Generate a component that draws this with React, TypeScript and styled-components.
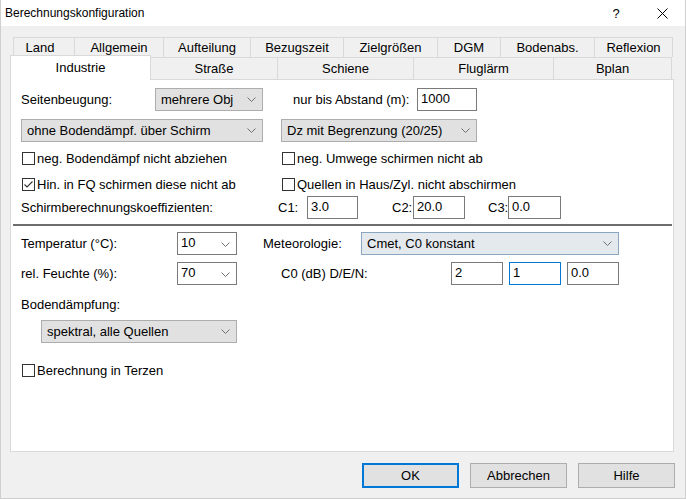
import React from 'react';
import styled, { createGlobalStyle, css } from 'styled-components';

const GlobalStyle = createGlobalStyle`
  html, body {
    margin: 0;
    padding: 0;
    background: #ffffff;
  }
  body {
    font-family: "Liberation Sans", Arial, sans-serif;
    font-size: 13px;
    color: #000;
  }
`;

const Window = styled.div`
  width: 686px;
  height: 499px;
  box-sizing: border-box;
  border: 1px solid #cfcfcf;
  border-top: none;
  background: #f0f0f0;
  display: flex;
  flex-direction: column;
`;

const TitleBar = styled.div`
  height: 26px;
  flex: none;
  background: #fff;
  display: flex;
  align-items: center;
  font-size: 12px;
  padding-left: 4px;
`;

const Title = styled.span`
  flex: 1;
`;

const CaptionButton = styled.div`
  width: 46px;
  height: 26px;
  display: flex;
  align-items: center;
  justify-content: center;
  font-size: 13px;
`;

const Body = styled.div`
  flex: 1;
  display: flex;
  flex-direction: column;
  padding: 11px 10px 0 9px;
`;

const TabRow = styled.div<{ $indent: number; $height: number }>`
  display: flex;
  margin-left: ${p => p.$indent}px;
  height: ${p => p.$height}px;
`;

const Tab = styled.div<{ $width: number; $selected?: boolean; $shift?: number }>`
  width: ${p => p.$width}px;
  box-sizing: border-box;
  display: flex;
  align-items: center;
  justify-content: center;
  border: 1px solid #d9d9d9;
  border-bottom: none;
  margin-left: -1px;
  padding-right: ${p => p.$shift ?? 0}px;
  background: #f0f0f0;
  &:first-child {
    margin-left: 0;
  }
  ${p => p.$selected && css`
    background: #fff;
    margin: -2px 0 -1px 0;
    position: relative;
    z-index: 1;
    align-items: flex-start;
    padding-top: 4px;
  `}
`;

const Panel = styled.div`
  width: 664px;
  height: 373px;
  box-sizing: border-box;
  border: 1px solid #d9d9d9;
  background: #fff;
  padding: 8px 0 0 10px;
  display: flex;
  flex-direction: column;
`;

const Row = styled.div<{ $top?: number; $height?: number }>`
  display: flex;
  align-items: center;
  margin-top: ${p => p.$top ?? 0}px;
  height: ${p => p.$height ?? 23}px;
`;

const Label = styled.span<{ $width?: number; $gap?: number }>`
  flex: none;
  width: ${p => (p.$width ? `${p.$width}px` : 'auto')};
  margin-left: ${p => p.$gap ?? 0}px;
  white-space: nowrap;
`;

const TextField = styled.div<{ $width: number; $gap?: number; $focused?: boolean }>`
  flex: none;
  width: ${p => p.$width}px;
  height: 23px;
  box-sizing: border-box;
  margin-left: ${p => p.$gap ?? 0}px;
  border: 1px solid ${p => (p.$focused ? '#0078d7' : '#7a7a7a')};
  background: #fff;
  padding: 2px 0 0 3px;
  line-height: 16px;
`;

type ComboKind = 'grey' | 'white' | 'hover';

const comboColors: Record<ComboKind, { bg: string; border: string }> = {
  grey: { bg: '#e1e1e1', border: '#adadad' },
  white: { bg: '#ffffff', border: '#7a7a7a' },
  hover: { bg: '#e4e9ee', border: '#8aa6c1' },
};

const ComboBox = styled.div<{ $width: number; $gap?: number; $kind: ComboKind; $height?: number }>`
  flex: none;
  width: ${p => p.$width}px;
  height: ${p => p.$height ?? 23}px;
  box-sizing: border-box;
  margin-left: ${p => p.$gap ?? 0}px;
  background: ${p => comboColors[p.$kind].bg};
  border: 1px solid ${p => comboColors[p.$kind].border};
  display: flex;
  align-items: center;
  padding: 0 6px 0 ${p => (p.$kind === 'white' ? 3 : 5)}px;
  ${p => p.$kind === 'white' && css`
    align-items: flex-start;
    padding-top: 2px;
  `}
`;

const ComboText = styled.span`
  flex: 1;
  white-space: nowrap;
`;

const Chevron = styled.svg`
  flex: none;
  align-self: center;
`;

const CheckItem = styled.label<{ $width?: number }>`
  flex: none;
  width: ${p => (p.$width ? `${p.$width}px` : 'auto')};
  display: flex;
  align-items: center;
  padding-left: 1px;
  box-sizing: border-box;
  white-space: nowrap;
`;

const Box = styled.span`
  width: 13px;
  height: 13px;
  box-sizing: border-box;
  border: 1px solid #333;
  background: #fff;
  margin-right: 2px;
  display: flex;
  align-items: center;
  justify-content: center;
`;

const Separator = styled.div`
  height: 2px;
  background: #6d6d6d;
  margin: 5px 0 0 -8px;
  width: 659px;
`;

const ButtonBar = styled.div`
  display: flex;
  justify-content: flex-end;
  gap: 11px;
  margin-top: 11px;
`;

const Button = styled.div<{ $default?: boolean }>`
  width: 97px;
  height: 25px;
  box-sizing: border-box;
  background: #e1e1e1;
  border: ${p => (p.$default ? '2px solid #0078d7' : '1px solid #adadad')};
  display: flex;
  align-items: center;
  justify-content: center;
`;

function Combo({ text, width, gap, kind = 'grey' }: { text: string; width: number; gap?: number; kind?: ComboKind }) {
  return (
    <ComboBox $width={width} $gap={gap} $kind={kind}>
      <ComboText>{text}</ComboText>
      <Chevron width="9" height="5" viewBox="0 0 9 5">
        <polyline points="0.5,0.5 4.5,4.5 8.5,0.5" fill="none" stroke="#707070" strokeWidth="1" />
      </Chevron>
    </ComboBox>
  );
}

function Check({ text, checked, width }: { text: string; checked?: boolean; width?: number }) {
  return (
    <CheckItem $width={width}>
      <Box>
        {checked && (
          <svg width="11" height="11" viewBox="0 0 11 11">
            <polyline points="1.5,5.5 4,8 9.5,2.5" fill="none" stroke="#333" strokeWidth="1.1" />
          </svg>
        )}
      </Box>
      {text}
    </CheckItem>
  );
}

// [caption, width, extra right padding]
const topTabs: [string, number, number][] = [
  ['Land', 62, 8],
  ['Allgemein', 90, 0],
  ['Aufteilung', 88, 0],
  ['Bezugszeit', 94, 0],
  ['Zielgrößen', 95, 0],
  ['DGM', 64, 0],
  ['Bodenabs.', 95, 0],
  ['Reflexion', 79, 0],
];

const bottomTabs: [string, number][] = [
  ['Industrie', 141],
  ['Straße', 128],
  ['Schiene', 137],
  ['Fluglärm', 141],
  ['Bplan', 119],
];

export default function App() {
  return (
    <>
      <GlobalStyle />
      <Window>
        <TitleBar>
          <Title>Berechnungskonfiguration</Title>
          <CaptionButton>?</CaptionButton>
          <CaptionButton>
            <svg width="11" height="11" viewBox="0 0 11 11">
              <path d="M0.5 0.5 L10.5 10.5 M10.5 0.5 L0.5 10.5" stroke="#000" strokeWidth="1" />
            </svg>
          </CaptionButton>
        </TitleBar>
        <Body>
          <TabRow $indent={3} $height={20}>
            {topTabs.map(([name, w, shift]) => (
              <Tab key={name} $width={w} $shift={shift}>{name}</Tab>
            ))}
          </TabRow>
          <TabRow $indent={0} $height={22}>
            {bottomTabs.map(([name, w], i) => (
              <Tab key={name} $width={w} $selected={i === 0}>{name}</Tab>
            ))}
          </TabRow>
          <Panel>
            <Row>
              <Label $width={134}>Seitenbeugung:</Label>
              <Combo text="mehrere Obj" width={108} />
              <Label $width={124} $gap={30}>nur bis Abstand (m):</Label>
              <TextField $width={60}>1000</TextField>
            </Row>
            <Row $top={7} $height={24}>
              <Combo text="ohne Bodendämpf. über Schirm" width={242} />
              <Combo text="Dz mit Begrenzung (20/25)" width={196} gap={18} />
            </Row>
            <Row $top={6} $height={20}>
              <Check text="neg. Bodendämpf nicht abziehen" width={260} />
              <Check text="neg. Umwege schirmen nicht ab" />
            </Row>
            <Row $top={6} $height={20}>
              <Check text="Hin. in FQ schirmen diese nicht ab" checked width={260} />
              <Check text="Quellen in Haus/Zyl. nicht abschirmen" />
            </Row>
            <Row $top={2}>
              <Label $width={257}>Schirmberechnungskoeffizienten:</Label>
              <Label $width={29}>C1:</Label>
              <TextField $width={51}>3.0</TextField>
              <Label $width={21} $gap={34}>C2:</Label>
              <TextField $width={52}>20.0</TextField>
              <Label $width={20} $gap={23}>C3:</Label>
              <TextField $width={53}>0.0</TextField>
            </Row>
            <Separator />
            <Row $top={6}>
              <Label $width={156}>Temperatur (°C):</Label>
              <Combo text="10" width={60} kind="white" />
              <Label $width={98} $gap={26}>Meteorologie:</Label>
              <Combo text="Cmet, C0 konstant" width={258} kind="hover" />
            </Row>
            <Row $top={7}>
              <Label $width={156}>rel. Feuchte (%):</Label>
              <Combo text="70" width={60} kind="white" />
              <Label $width={170} $gap={44}>C0 (dB) D/E/N:</Label>
              <TextField $width={52}>2</TextField>
              <TextField $width={52} $gap={6} $focused>1</TextField>
              <TextField $width={52} $gap={6}>0.0</TextField>
            </Row>
            <Row $top={9} $height={20}>
              <Label>Bodendämpfung:</Label>
            </Row>
            <Row $top={6}>
              <Combo text="spektral, alle Quellen" width={196} gap={20} />
            </Row>
            <Row $top={17} $height={20}>
              <Check text="Berechnung in Terzen" />
            </Row>
          </Panel>
          <ButtonBar>
            <Button $default>OK</Button>
            <Button>Abbrechen</Button>
            <Button>Hilfe</Button>
          </ButtonBar>
        </Body>
      </Window>
    </>
  );
}
